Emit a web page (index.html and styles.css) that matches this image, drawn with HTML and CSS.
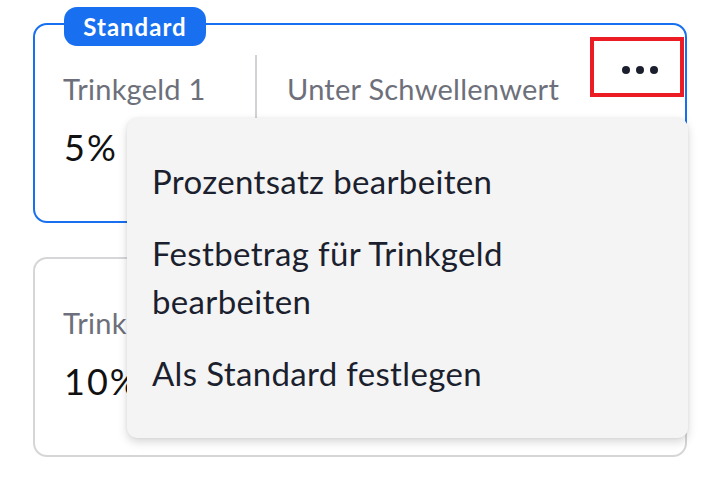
FILE: index.html
```html
<!DOCTYPE html>
<html lang="de">
<head>
<meta charset="utf-8" />
<meta name="viewport" content="width=device-width, initial-scale=1"/>
<link rel="stylesheet" href="styles.css">
</head>
<body>
  <div class="tips">
    <div class="tip-card is-default">
      <span class="badge">Standard</span>
      <div class="tip-row">
        <div class="tip-col first">
          <div class="tip-label">Trinkgeld 1</div>
          <div class="tip-value">5%</div>
        </div>
        <div class="tip-col">
          <div class="tip-label">Unter Schwellenwert</div>
        </div>
      </div>
      <button class="more-btn" aria-label="Mehr">
        <span class="dot"></span><span class="dot"></span><span class="dot"></span>
      </button>
      <ul class="menu">
        <li>Prozentsatz bearbeiten</li>
        <li>Festbetrag für Trinkgeld bearbeiten</li>
        <li>Als Standard festlegen</li>
      </ul>
    </div>

    <div class="tip-card">
      <div class="tip-row">
        <div class="tip-col first">
          <div class="tip-label">Trinkgeld 2</div>
          <div class="tip-value">10%</div>
        </div>
      </div>
    </div>
  </div>
</body>
</html>
```

FILE: styles.css
```css
body { margin: 0; background: #fff; font-family: Lato, "Noto Sans", sans-serif; }

.tips { padding: 23px 33px 0; display: flex; flex-direction: column; gap: 34px; }

.tip-card {
  position: relative;
  height: 200px;
  box-sizing: border-box;
  border: 2px solid #d6d6d8;
  border-radius: 14px;
  padding: 30px 30px 0;
}
.tip-card.is-default { border-color: #1870f0; }

.badge {
  position: absolute;
  left: 29px; top: -18px;
  width: 142px; height: 39px;
  box-sizing: border-box;
  display: flex; align-items: center; justify-content: center;
  background: #1870f0;
  color: #fff;
  font-weight: bold;
  font-size: 24px;
  letter-spacing: 1px;
  border-radius: 13px;
}

.tip-row { display: flex; }
.tip-col { padding-top: 16px; }
.tip-col.first { width: 192px; border-right: 2px solid #d2d2d4; height: 110px; box-sizing: border-box; }
.tip-col + .tip-col { padding-left: 32px; }

.tip-label { color: #6d707a; font-size: 29px; letter-spacing: 0.25px; margin-left: -2px; }
.tip-value { color: #111; font-size: 36px; letter-spacing: 2px; margin-top: 19px; margin-left: -1px; }

.more-btn {
  position: absolute;
  top: 12px; right: 1px;
  width: 94px; height: 60px;
  box-sizing: border-box;
  border: 4px solid #ec1c24;
  background: #fff;
  display: flex; align-items: center; justify-content: center;
  gap: 6px;
  padding: 6px 0 0 6px;
}
.dot { width: 8px; height: 8px; border-radius: 50%; background: #1b1e2c; }

.menu {
  position: absolute;
  top: 93px; left: 92px; right: -3px;
  margin: 0;
  padding: 27px 0 29px;
  list-style: none;
  background: #f4f4f4;
  border-radius: 10px;
  box-shadow: 0 4px 10px rgba(0,0,0,0.16), 0 0 3px rgba(0,0,0,0.06);
  z-index: 5;
}
.menu li {
  padding: 12px 170px 12px 25px;
  font-size: 33px;
  letter-spacing: 0.35px;
  line-height: 48px;
  color: #1b1f2e;
}
```
